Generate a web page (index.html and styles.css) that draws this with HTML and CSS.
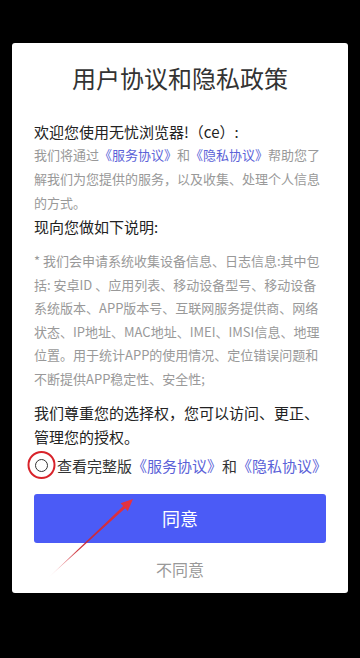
FILE: index.html
```html
<!DOCTYPE html>
<html>
<head>
	<title>用户协议和隐私政策</title>
	<meta charset="utf-8">
<link rel="stylesheet" href="styles.css">
</head>
<body>
<div class="dialogo">
	<h1 class="titulo">用户协议和隐私政策</h1>
	<p class="forte">欢迎您使用无忧浏览器!（ce）:</p>
	<p class="fraco">我们将通过<a class="link">《服务协议》</a>和<a class="link">《隐私协议》</a>帮助您了解我们为您提供的服务，以及收集、处理个人信息的方式。</p>
	<p class="forte">现向您做如下说明:</p>
	<p class="fraco lista">* 我们会申请系统收集设备信息、日志信息:其中包括: 安卓ID 、应用列表、移动设备型号、移动设备系统版本、APP版本号、互联网服务提供商、网络状态、IP地址、MAC地址、IMEI、IMSI信息、地理位置。用于统计APP的使用情况、定位错误问题和不断提供APP稳定性、安全性;</p>
	<p class="forte escolha">我们尊重您的选择权，您可以访问、更正、管理您的授权。</p>
	<div class="aceite">
		<span class="bolinha"></span>
		<span class="texto">查看完整版<a class="link">《服务协议》</a>和<a class="link">《隐私协议》</a></span>
	</div>
	<button class="concordo">同意</button>
	<div class="recusar">不同意</div>
</div>

<svg class="marca" width="360" height="658" viewBox="0 0 360 658">
	<defs>
		<linearGradient id="seta" x1="48" y1="578" x2="133" y2="499" gradientUnits="userSpaceOnUse">
			<stop offset="0" stop-color="#e0303a" stop-opacity="0"/>
			<stop offset="0.35" stop-color="#c8232c" stop-opacity="0.9"/>
			<stop offset="1" stop-color="#e8333f"/>
		</linearGradient>
	</defs>
	<circle cx="41.5" cy="465" r="13" fill="none" stroke="#d8232a" stroke-width="2"/>
	<polygon points="48,578 125.2,508.3 127.8,511.2 133,499 120.6,503.3 123.2,506.1" fill="url(#seta)"/>
</svg>
</body>
</html>
```

FILE: styles.css
```css
body{
	margin: 0;
	background: #000;
	font-family: "Noto Sans CJK SC", "Noto Sans", sans-serif;
	text-spacing-trim: space-all;
}
.dialogo{
	margin: 43px 12px 0;
	height: 550px;
	box-sizing: border-box;
	padding: 19px 22px 0;
	background: #fff;
	border-radius: 3px;
}
.titulo{
	margin: 0;
	font-size: 24px;
	font-weight: normal;
	line-height: 32px;
	text-align: center;
	color: #333;
}
p{
	margin: 0;
}
.forte{
	font-size: 15px;
	line-height: 23px;
	color: #222;
}
.titulo + .forte{
	margin-top: 26px;
}
.fraco{
	font-size: 13px;
	line-height: 24px;
	color: #999;
}
.lista{
	margin-top: 11px;
	line-height: 23.6px;
}
.escolha{
	margin-top: 10px;
	line-height: 24px;
}
.link{
	color: #5b62d8;
}
.aceite{
	display: flex;
	align-items: center;
	gap: 9px;
	margin-top: 5px;
	font-size: 15px;
	line-height: 24px;
	color: #333;
}
.bolinha{
	flex: none;
	width: 13px;
	height: 13px;
	margin-left: 1px;
	box-sizing: border-box;
	border: 1.5px solid #333;
	border-radius: 50%;
}
.texto{
	white-space: nowrap;
}
.concordo{
	display: block;
	width: 100%;
	height: 49px;
	margin-top: 16px;
	border: none;
	border-radius: 3px;
	background: #4b5bf6;
	color: #fff;
	font-family: inherit;
	font-size: 18px;
}
.recusar{
	margin-top: 14px;
	text-align: center;
	font-size: 16px;
	line-height: 24px;
	color: #999;
}
.marca{
	position: absolute;
	top: 0;
	left: 0;
	pointer-events: none;
}
```
